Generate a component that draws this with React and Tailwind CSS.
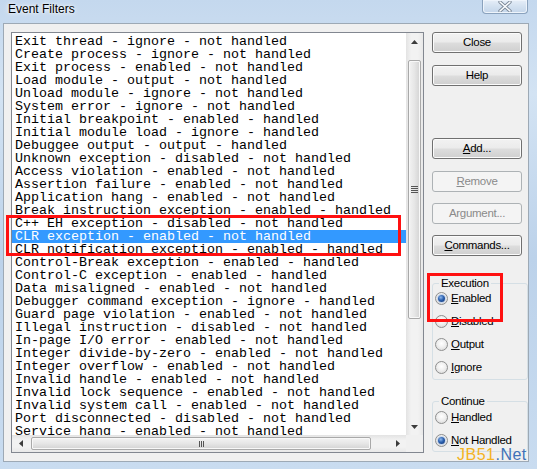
const rows = [
  'Exit thread - ignore - not handled',
  'Create process - ignore - not handled',
  'Exit process - enabled - not handled',
  'Load module - output - not handled',
  'Unload module - ignore - not handled',
  'System error - ignore - not handled',
  'Initial breakpoint - enabled - handled',
  'Initial module load - ignore - handled',
  'Debuggee output - output - handled',
  'Unknown exception - disabled - not handled',
  'Access violation - enabled - not handled',
  'Assertion failure - enabled - not handled',
  'Application hang - enabled - not handled',
  'Break instruction exception - enabled - handled',
  'C++ EH exception - disabled - not handled',
  'CLR exception - enabled - not handled',
  'CLR notification exception - enabled - handled',
  'Control-Break exception - enabled - handled',
  'Control-C exception - enabled - handled',
  'Data misaligned - enabled - not handled',
  'Debugger command exception - ignore - handled',
  'Guard page violation - enabled - not handled',
  'Illegal instruction - disabled - not handled',
  'In-page I/O error - enabled - not handled',
  'Integer divide-by-zero - enabled - not handled',
  'Integer overflow - enabled - not handled',
  'Invalid handle - enabled - not handled',
  'Invalid lock sequence - enabled - not handled',
  'Invalid system call - enabled - not handled',
  'Port disconnected - disabled - not handled',
  'Service hang - enabled - not handled',
];

const SELECTED = 15;

function Arrow({ dir }) {
  const pts = {
    up: '0,4 3.5,0 7,4',
    down: '0,0 3.5,4 7,0',
    left: '4,0 0,3.5 4,7',
    right: '0,0 4,3.5 0,7',
  }[dir];
  const vert = dir === 'up' || dir === 'down';
  return (
    <svg width={vert ? 7 : 4} height={vert ? 4 : 7}>
      <polygon points={pts} fill="#3c3c3c" />
    </svg>
  );
}

function Btn({ children, disabled }) {
  return (
    <div
      className={[
        'w-[90px] h-[21px] rounded-[3px] border flex items-center justify-center text-[11.5px] tracking-[-0.3px]',
        disabled
          ? 'border-[#adb2b5] bg-[#f4f4f4] text-[#8a8a8a]'
          : 'border-[#707070] bg-[linear-gradient(180deg,#f2f2f2_0%,#ebebeb_48%,#dddddd_52%,#cfcfcf_100%)] shadow-[inset_0_0_0_1px_#fbfbfb] text-black',
      ].join(' ')}
    >
      {children}
    </div>
  );
}

function Radio({ checked, children }) {
  return (
    <div className="h-[23px] flex items-center pl-[2px] gap-[3px]">
      <div className="w-[13px] h-[13px] rounded-full border border-[#8e8f8f] bg-[radial-gradient(circle_at_50%_40%,#ffffff_0%,#f0f0f0_45%,#d2d2d2_100%)] flex items-center justify-center">
        {checked && (
          <div className="w-[7px] h-[7px] rounded-full bg-[radial-gradient(circle_at_40%_35%,#8fb8ec_0%,#2d62b0_45%,#0d2f70_100%)] shadow-[0_0_0_1px_#c7d6ea]" />
        )}
      </div>
      <span className="text-[11.5px] tracking-[-0.3px] text-black">{children}</span>
    </div>
  );
}

function Group({ label, className, children }) {
  return (
    <div className={'relative w-[96px] rounded-[3px] border border-[#d5dfe5] ' + className}>
      <span className="absolute left-[6px] -top-[8px] px-[2px] bg-[#f0f0f0] text-[11.5px] tracking-[-0.3px] leading-[14px] text-black">
        {label}
      </span>
      {children}
    </div>
  );
}

export default function App() {
  return (
    <div
      className="relative w-[537px] h-[469px] overflow-hidden bg-[linear-gradient(180deg,#c4d8ee_0%,#d3e3f3_20%,#bcd2ea_55%,#c9dcf0_100%)]"
      style={{ fontFamily: '"Liberation Sans", Arial, sans-serif' }}
    >
      {/* title bar */}
      <div className="h-[23px] flex items-start">
        <span className="pl-[8px] pt-[2px] text-[12px] leading-[14px] text-black [text-shadow:0_0_6px_#ffffff,0_0_3px_#ffffff]">
          Event Filters
        </span>
        <div className="ml-auto mr-[9px] w-[46px] h-[14px] rounded-b-[4px] border border-t-0 border-[#8aa2bd] bg-[linear-gradient(180deg,#e6eef8_0%,#d3e1f0_50%,#c3d5ea_100%)] shadow-[inset_0_0_0_1px_#eef4fb] flex items-center justify-center">
          <svg width="14" height="11" viewBox="0 0 14 11">
            <path d="M2 1 L12 10 M12 1 L2 10" stroke="#7d8a99" strokeWidth="3.4" strokeLinecap="round" />
            <path d="M2 1 L12 10 M12 1 L2 10" stroke="#fbfdff" strokeWidth="1.6" strokeLinecap="round" />
          </svg>
        </div>
      </div>

      {/* dialog client */}
      <div className="ml-[3px] w-[526px] h-[439px] border border-[#9da9b5] bg-[#f0f0f0] flex pl-[7px] pt-[8px]">
        {/* list box */}
        <div className="w-[413px] h-[421px] border border-[#828790] bg-white flex flex-col">
          <div className="flex h-[402px]">
            <div
              className="flex-1 overflow-hidden pt-[2px] text-[13.33px] leading-[13px] text-black"
              style={{ fontFamily: '"Liberation Mono", "Courier New", monospace' }}
            >
              {rows.map((r, i) => (
                <div
                  key={i}
                  className={[
                    'h-[13px] pl-[3px] whitespace-pre',
                    i === SELECTED ? 'bg-[#3399ff] text-white' : '',
                  ].join(' ')}
                >
                  {r}
                </div>
              ))}
            </div>
            {/* vertical scrollbar */}
            <div className="w-[17px] flex flex-col bg-[linear-gradient(90deg,#e3e3e3_0%,#f2f2f2_30%,#f2f2f2_70%,#e8e8e8_100%)]">
              <div className="h-[17px] flex items-center justify-center">
                <Arrow dir="up" />
              </div>
              <div className="flex-1 flex flex-col pt-[10px] px-[2px]">
                <div className="h-[259px] rounded-[2px] border border-[#a9a9a9] bg-[linear-gradient(90deg,#f3f3f3_0%,#e6e6e6_50%,#d3d3d3_100%)] shadow-[inset_0_0_0_1px_#f8f8f8] flex flex-col items-center justify-center gap-[1px]">
                  <div className="w-[7px] h-[1px] bg-[#555]" />
                  <div className="w-[7px] h-[1px] bg-[#555]" />
                  <div className="w-[7px] h-[1px] bg-[#555]" />
                  <div className="w-[7px] h-[1px] bg-[#555]" />
                </div>
              </div>
              <div className="h-[17px] flex items-center justify-center">
                <Arrow dir="down" />
              </div>
            </div>
          </div>
          {/* horizontal scrollbar */}
          <div className="h-[17px] flex">
            <div className="flex-1 flex items-center bg-[linear-gradient(180deg,#e3e3e3_0%,#f2f2f2_30%,#f2f2f2_70%,#e8e8e8_100%)]">
              <div className="w-[17px] h-[17px] flex items-center justify-center">
                <Arrow dir="left" />
              </div>
              <div className="ml-[2px] w-[340px] h-[13px] rounded-[2px] border border-[#a9a9a9] bg-[linear-gradient(180deg,#f3f3f3_0%,#e6e6e6_50%,#d3d3d3_100%)] shadow-[inset_0_0_0_1px_#f8f8f8] flex items-center justify-center gap-[1px]">
                <div className="w-[1px] h-[6px] bg-[#555]" />
                <div className="w-[1px] h-[6px] bg-[#555]" />
                <div className="w-[1px] h-[6px] bg-[#555]" />
              </div>
              <div className="ml-auto w-[17px] h-[17px] flex items-center justify-center">
                <Arrow dir="right" />
              </div>
            </div>
            <div className="w-[17px] h-[17px] bg-[#f0f0f0]" />
          </div>
        </div>

        {/* right column */}
        <div className="ml-[8px] w-[96px] flex flex-col">
          <Btn>Close</Btn>
          <div className="mt-[12px]">
            <Btn>Help</Btn>
          </div>
          <div className="mt-[52px]">
            <Btn><span className="underline">A</span>dd...</Btn>
          </div>
          <div className="mt-[12px]">
            <Btn disabled><span className="underline">R</span>emove</Btn>
          </div>
          <div className="mt-[11px]">
            <Btn disabled>Argument...</Btn>
          </div>
          <div className="mt-[11px]">
            <Btn><span className="underline">C</span>ommands...</Btn>
          </div>

          <Group label="Execution" className="mt-[27px] h-[97px] pt-[3px]">
            <Radio checked><span className="underline">E</span>nabled</Radio>
            <Radio><span className="underline">D</span>isabled</Radio>
            <Radio><span className="underline">O</span>utput</Radio>
            <Radio><span className="underline">I</span>gnore</Radio>
          </Group>

          <Group label="Continue" className="mt-[21px] h-[51px] pt-[4px]">
            <Radio><span className="underline">H</span>andled</Radio>
            <Radio checked><span className="underline">N</span>ot Handled</Radio>
          </Group>
        </div>
      </div>

      {/* red highlight boxes */}
      <div className="absolute left-[6px] top-[215px] w-[395px] h-[41px] border-[3px] border-[#ff1010]" />
      <div className="absolute left-[427px] top-[273px] w-[76px] h-[49px] border-[3px] border-[#ff1010]" />

      {/* watermark */}
      <div className="absolute left-[457px] top-[446px] text-[16px] leading-[18px] tracking-[0.5px]">
        <span className="text-[#f4b323]">JB51</span>
        <span className="text-[#3f72b8]">.Net</span>
      </div>
    </div>
  );
}
